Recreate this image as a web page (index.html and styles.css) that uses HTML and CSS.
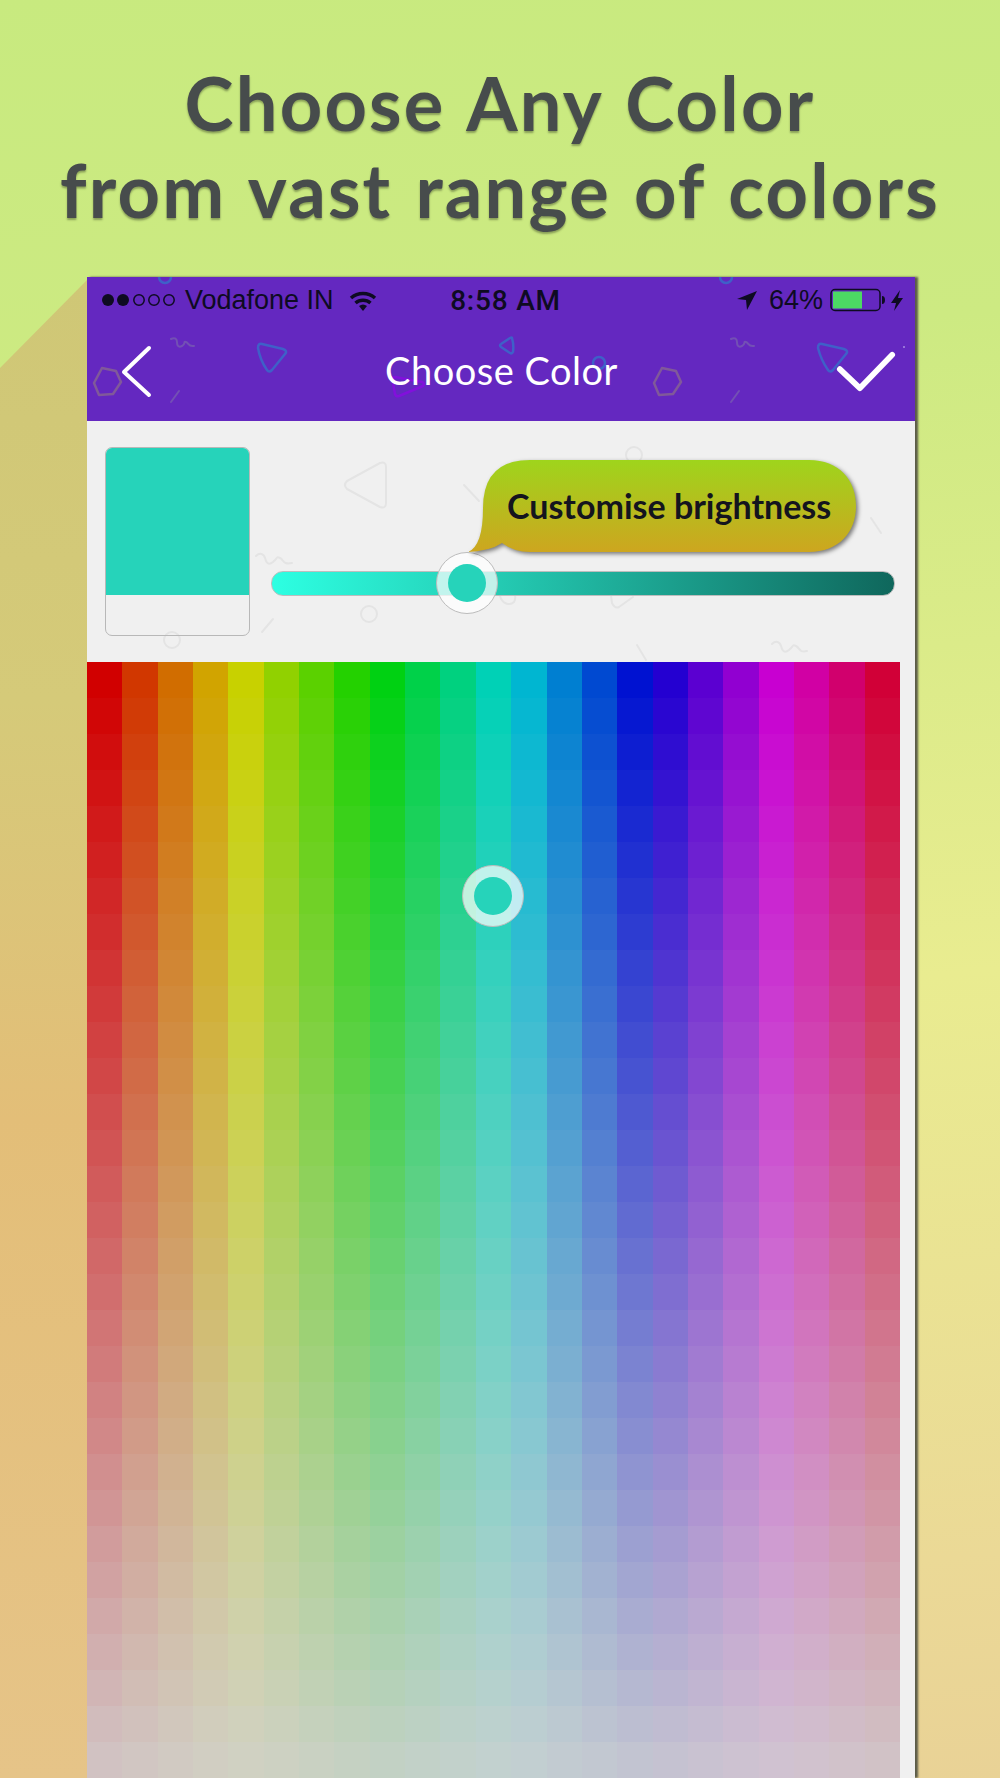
FILE: index.html
```html
<!DOCTYPE html>
<html lang="en">
<head>
    <meta charset="UTF-8">
    <title>Choose Any Color</title>
    <link rel="stylesheet" href="styles.css">
</head>
<body>
<div class="cast-shadow"></div>
<h1 class="headline">Choose Any Color<br>from vast range of colors</h1>

<div class="phone">
    <div class="topbar">
        <svg class="doodles" viewBox="87 277 828 144">
            <g class="doodle-blue">
                <circle cx="165" cy="277" r="6"/>
                <path d="M262 344l21 5q5 2 2 5l-13 16q-3 3-5 0q-7-10-9-22q0-5 4-4z"/>
                <path d="M512 338q2 7 1 14q-1 2-3 1l-9-6q-2-2 0-3l9-6q2-1 2 0z"/>
                <circle cx="599" cy="363" r="6"/>
                <circle cx="726" cy="277" r="6"/>
                <path d="M822 344l22 5q5 2 2 5l-13 16q-3 3-5 0q-7-10-10-22q0-5 4-4z"/>
            </g>
            <g class="doodle-brown">
                <path d="M102 368l14 3 5 11-8 12-14 1-5-12z"/>
                <path d="M662 368l14 3 5 11-8 12-14 1-5-12z"/>
            </g>
            <g class="doodle-grey">
                <path d="M171 339c4-2 6 0 6 3s1 6 5 4 1-5 4-4 2 5 8 4"/>
                <path d="M171 402l8-11"/>
                <path d="M731 339c4-2 6 0 6 3s1 6 5 4 1-5 4-4 2 5 8 4"/>
                <path d="M731 402l8-11"/>
            </g>
            <g class="doodle-violet">
                <path d="M395 377l27 5q3 1 1 4l-24 10q-3 1-4-2q-2-8-2-15q0-2 2-2z"/>
            </g>
            <circle class="doodle-dot" cx="904" cy="347" r="1"/>
        </svg>

        <div class="status">
            <div class="status-left">
                <svg class="signal" viewBox="0 0 76 14">
                    <circle cx="7" cy="7" r="6"/>
                    <circle cx="22" cy="7" r="6"/>
                    <circle class="off" cx="38" cy="7" r="5.2"/>
                    <circle class="off" cx="53" cy="7" r="5.2"/>
                    <circle class="off" cx="68" cy="7" r="5.2"/>
                </svg>
                <span>Vodafone IN</span>
                <svg class="wifi" viewBox="350 288 28 22">
                    <path class="arc" d="M352 297a18 18 0 0 1 24 0"/>
                    <path class="arc" d="M356.500 302a11.500 11.500 0 0 1 15 0"/>
                    <path d="M360 305q4-3 8 0l-4 5z"/>
                </svg>
            </div>
            <div class="status-time">8:58 AM</div>
            <div class="status-right">
                <svg class="locate" viewBox="736 290 22 21">
                    <path d="M737 299l20-8-10 19-1-10z"/>
                </svg>
                <span>64%</span>
                <svg class="battery" viewBox="831 288 56 24">
                    <rect class="shell" x="832" y="289.500" width="49" height="21" rx="4"/>
                    <rect class="level" x="834" y="291.500" width="29" height="17"/>
                    <path d="M883 296q3 0 3 4t-3 4z"/>
                </svg>
                <svg class="bolt" viewBox="891 288 14 23">
                    <path d="M901 289l-9 13h5l-2 8 9-13h-5z"/>
                </svg>
            </div>
        </div>

        <div class="nav">
            <svg class="nav-back" viewBox="120 345 32 54">
                <path d="M148 348l-25 24 25 23"/>
            </svg>
            <div class="nav-title">Choose Color</div>
            <svg class="nav-done" viewBox="835 348 63 44">
                <path d="M839 367l21 20 34-35"/>
            </svg>
        </div>
    </div>

    <div class="panel">
        <svg class="doodles" viewBox="87 421 828 241">
            <g class="doodle-light">
                <path d="M347 481l33-18q6-2 6 4v36q0 6-6 4l-33-18q-4-4 0-8z"/>
                <path d="M464 485l15 16"/>
                <path d="M256 556c4-4 8-2 9 2s3 8 8 4 3-6 7-4 3 7 12 5"/>
                <circle cx="369" cy="614" r="8"/>
                <circle cx="172" cy="640" r="8"/>
                <path d="M273 619l-11 13"/>
                <circle cx="634" cy="455" r="8"/>
                <path d="M871 518l10 15"/>
                <path d="M500 596c2 8 10 10 14 6 2-3 1-5 1-7"/>
                <path d="M608 573l4 30q3 6 7 4l14-10"/>
                <path d="M637 645l9 15"/>
                <path d="M772 644c4-4 8-2 9 2s3 8 8 4 3-6 7-4 3 7 11 5"/>
            </g>
        </svg>

        <div class="swatch">
            <div class="swatch-fill"></div>
        </div>

        <div class="slider">
            <div class="picker slider-thumb"><span></span></div>
        </div>

        <div class="bubble">
            <svg class="bubble-shape" viewBox="465 455 400 105">
                <defs>
                    <linearGradient id="bubbleFill" x1="0" y1="0" x2="0" y2="1">
                        <stop offset="0" stop-color="#9fd41c"/>
                        <stop offset="1" stop-color="#cda61f"/>
                    </linearGradient>
                </defs>
                <path fill="url(#bubbleFill)" d="M468 552q15-6 15-44 0-48 47-48h279c30 0 47 20 47 46s-17 46-47 46H530q-16 0-28-9-12 8-34 9z"/>
            </svg>
            <span class="bubble-text">Customise brightness</span>
        </div>
    </div>

    <div class="palette">
        <div class="palette-grid" id="paletteGrid"></div>
        <div class="picker palette-marker"><span></span></div>
    </div>
</div>

<script src="grid.js"></script>
</body>
</html>
```

FILE: styles.css
```css
*{
    margin: 0;
    padding: 0;
    box-sizing: border-box;
}
body{
    position: relative;
    width: 1000px;
    height: 1778px;
    overflow: hidden;
    background: linear-gradient(174deg, #c8ea7f 0%, #cdea82 22%, #e9ec90 57%, #ebd996 88%, #e9d296 100%);
    font-family: "Liberation Sans", Arial, sans-serif;
}
/* the long shadow to the left of the phone */
.cast-shadow{
    position: absolute;
    left: 0;
    top: 280px;
    width: 87px;
    height: 1498px;
    clip-path: polygon(100% 0, 100% 100%, 0 100%, 0 88px);
    background: linear-gradient(180deg, #cfc776 0%, #d5ca79 28%, #e3be78 56%, #e6c488 100%);
}
.headline{
    position: relative;
    height: 277px;
    padding-top: 59px;
    font-family: Lato, sans-serif;
    font-size: 74px;
    font-weight: 700;
    line-height: 87px;
    letter-spacing: 2.200px;
    word-spacing: 3px;
    text-align: center;
    color: #474c4c;
    text-shadow: 0 2px 2px rgba(60, 70, 40, .45);
}
.phone{
    position: relative;
    width: 828px;
    height: 1501px;
    margin-left: 87px;
    background: #f0f0f0;
    box-shadow: 3px 0 2px #5c5c48;
}
.doodles{
    position: absolute;
    left: 0;
    top: 0;
    width: 100%;
    height: 100%;
    fill: none;
    stroke-linecap: round;
    stroke-linejoin: round;
}
.doodle-blue{
    stroke: #3f60c8;
    stroke-width: 2.500;
}
.doodle-brown{
    stroke: #80599a;
    stroke-width: 2.500;
}
.doodle-grey{
    stroke: #7350b4;
    stroke-width: 2;
}
.doodle-violet{
    stroke: #8210dc;
    stroke-width: 2.500;
}
.doodle-dot{
    fill: #a88ce0;
}
.doodle-light{
    stroke: #e4e4e4;
    stroke-width: 2;
}

/* top bar */
.topbar{
    position: relative;
    height: 144px;
    background: #6428c0;
}
.status{
    position: relative;
    display: grid;
    grid-template-columns: 1fr auto 1fr;
    align-items: center;
    height: 46px;
    padding: 0 11px 0 14px;
    font-size: 27px;
    color: #0e0b22;
}
.status svg{
    display: block;
    fill: #0e0b22;
}
.status-left{
    display: flex;
    align-items: center;
}
.signal{
    width: 76px;
    height: 14px;
}
.signal .off{
    fill: none;
    stroke: #0e0b22;
    stroke-width: 1.500;
}
.status-left span{
    margin-left: 8px;
}
.wifi{
    width: 28px;
    height: 22px;
    margin-left: 15px;
}
.wifi .arc{
    fill: none;
    stroke: #0e0b22;
    stroke-width: 3.500;
}
.status-time{
    margin-left: 6px;
    font-family: Roboto, sans-serif;
    font-size: 28px;
    font-weight: 500;
    letter-spacing: .8px;
}
.status-right{
    display: flex;
    align-items: center;
    justify-content: flex-end;
}
.locate{
    width: 22px;
    height: 21px;
}
.status-right span{
    margin-left: 11px;
}
.battery{
    width: 56px;
    height: 24px;
    margin-left: 7px;
}
.battery .shell{
    fill: none;
    stroke: #0e0b22;
    stroke-width: 1.500;
}
.battery .level{
    fill: #4cd964;
}
.bolt{
    width: 14px;
    height: 23px;
    margin-left: 4px;
}
.nav{
    position: relative;
    display: flex;
    align-items: center;
    justify-content: space-between;
    height: 98px;
    padding: 0 19px 0 34px;
}
.nav svg{
    display: block;
    fill: none;
    stroke: #ffffff;
    stroke-linecap: round;
    stroke-linejoin: round;
}
.nav-back{
    width: 32px;
    height: 54px;
    stroke-width: 4;
}
.nav-done{
    width: 60px;
    height: 42px;
    stroke-width: 6;
}
.nav-title{
    position: relative;
    left: 7px;
    top: -2px;
    font-family: Lato, sans-serif;
    font-size: 38px;
    letter-spacing: .5px;
    color: #ffffff;
}

/* preview and brightness */
.panel{
    position: relative;
    display: flex;
    align-items: flex-start;
    height: 241px;
    padding: 26px 20px 0 18px;
    background: #f0f0f0;
}
.swatch{
    position: relative;
    flex: none;
    width: 145px;
    height: 189px;
    border: 1.500px solid #b8b8b8;
    border-radius: 7px;
    overflow: hidden;
}
.swatch-fill{
    height: 147px;
    background: #26d3ba;
}
.slider{
    position: relative;
    flex: none;
    width: 624px;
    height: 25px;
    margin: 124px 0 0 21px;
    border: 1px solid #bdbdbd;
    border-radius: 12px;
    background: linear-gradient(90deg, #2dffe2 0%, #26d3ba 31%, #0f675c 100%);
}
.picker{
    position: absolute;
    display: flex;
    align-items: center;
    justify-content: center;
    width: 62px;
    height: 62px;
    border: 1.500px solid #bcbcbc;
    border-radius: 50%;
    background: rgba(255, 255, 255, .72);
}
.picker span{
    width: 38px;
    height: 38px;
    border-radius: 50%;
    background: #26d3ba;
}
.slider-thumb{
    left: 164px;
    top: -20px;
}
.bubble{
    position: absolute;
    left: 378px;
    top: 34px;
    display: flex;
    align-items: center;
    width: 400px;
    height: 105px;
    padding: 0 0 4px 42px;
}
.bubble-shape{
    position: absolute;
    left: 0;
    top: 0;
    width: 100%;
    height: 100%;
    filter: drop-shadow(2px 2px 2px rgba(0, 0, 0, .5));
    overflow: visible;
}
.bubble-text{
    position: relative;
    font-family: Lato, sans-serif;
    font-size: 34px;
    font-weight: 700;
    white-space: nowrap;
    color: #14141e;
}

/* colour grid */
.palette{
    position: relative;
    height: 1116px;
    padding-right: 15px;
}
.palette-grid{
    display: grid;
    grid-template-columns: repeat(23, 1fr);
    grid-auto-rows: 36px;
    height: 1116px;
}
.palette-marker{
    left: 375px;
    top: 203px;
}
```

FILE: grid.js
```js
var grid = document.getElementById("paletteGrid");
var cols = 23;
var rows = 31;

function hsvToRgb(h, s, v) {
  function f(n) {
    var k = (n + h / 60) % 6;
    return Math.round(255 * (v - v * s * Math.max(0, Math.min(k, 4 - k, 1))));
  }
  return "rgb(" + f(5) + "," + f(3) + "," + f(1) + ")";
}

for (var r = 0; r < rows; r++) {
  for (var c = 0; c < cols; c++) {
    var cell = document.createElement("div");
    // washes out towards the bottom, hue goes round the columns
    cell.style.backgroundColor = hsvToRgb(c * 360 / cols, 1 - r * 0.031, 0.82);
    grid.appendChild(cell);
  }
}
```
